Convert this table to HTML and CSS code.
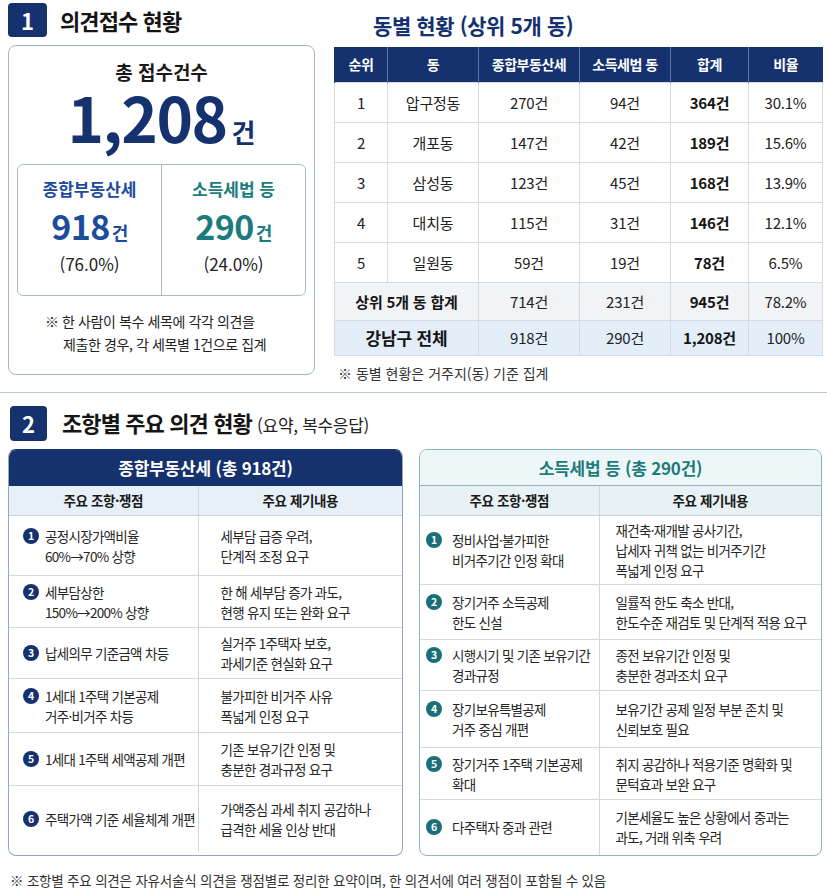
FILE: index.html
```html
<!DOCTYPE html>
<html lang="ko">
<head>
<meta charset="utf-8">
<title>의견접수 현황</title>
<link rel="stylesheet" href="styles.css">
</head>
<body>
<div class="page">
  <section class="sec1">
    <div class="col-left">
      <div class="sec-head">
        <span class="badge">1</span>
        <h1 class="sec-title">의견접수 현황</h1>
      </div>
      <div class="card">
        <div class="card-label">총 접수건수</div>
        <div class="big-num">1,208<span class="unit">건</span></div>
        <div class="split">
          <div class="split-cell blue">
            <div class="split-label">종합부동산세</div>
            <div class="split-num">918<span class="unit-s">건</span></div>
            <div class="split-pct">(76.0%)</div>
          </div>
          <div class="split-cell teal">
            <div class="split-label">소득세법 등</div>
            <div class="split-num">290<span class="unit-s">건</span></div>
            <div class="split-pct">(24.0%)</div>
          </div>
        </div>
        <p class="card-note">※ 한 사람이 복수 세목에 각각 의견을<br>제출한 경우, 각 세목별 1건으로 집계</p>
      </div>
    </div>
    <div class="col-right">
      <h2 class="sub-title">동별 현황 (상위 5개 동)</h2>
      <table class="dong">
        <colgroup>
          <col class="c1"><col class="c2"><col class="c3"><col class="c4"><col class="c5"><col class="c6">
        </colgroup>
        <thead>
          <tr><th>순위</th><th>동</th><th>종합부동산세</th><th>소득세법 동</th><th>합계</th><th>비율</th></tr>
        </thead>
        <tbody>
          <tr><td>1</td><td>압구정동</td><td>270건</td><td>94건</td><td class="b">364건</td><td>30.1%</td></tr>
          <tr><td>2</td><td>개포동</td><td>147건</td><td>42건</td><td class="b">189건</td><td>15.6%</td></tr>
          <tr><td>3</td><td>삼성동</td><td>123건</td><td>45건</td><td class="b">168건</td><td>13.9%</td></tr>
          <tr><td>4</td><td>대치동</td><td>115건</td><td>31건</td><td class="b">146건</td><td>12.1%</td></tr>
          <tr><td>5</td><td>일원동</td><td>59건</td><td>19건</td><td class="b">78건</td><td>6.5%</td></tr>
          <tr class="sum"><td colspan="2" class="b">상위 5개 동 합계</td><td>714건</td><td>231건</td><td class="b">945건</td><td>78.2%</td></tr>
          <tr class="total"><td colspan="2" class="b big">강남구 전체</td><td>918건</td><td>290건</td><td class="b">1,208건</td><td>100%</td></tr>
        </tbody>
      </table>
      <p class="dong-note">※ 동별 현황은 거주지(동) 기준 집계</p>
    </div>
  </section>

  <hr class="divider">

  <section class="sec2">
    <div class="sec-head sec-head2">
      <span class="badge badge2">2</span>
      <h1 class="sec-title">조항별 주요 의견 현황 <span class="sec-sub">(요약, 복수응답)</span></h1>
    </div>
    <div class="boxes">
      <div class="box box-navy">
        <div class="box-head">종합부동산세 (총 918건)</div>
        <table class="issues">
          <colgroup><col class="l1"><col class="l2"></colgroup>
          <thead><tr><th>주요 조항·쟁점</th><th>주요 제기내용</th></tr></thead>
          <tbody>
            <tr><td class="item-cell"><div class="item"><span class="num">1</span><span>공정시장가액비율<br>60%→70% 상향</span></div></td><td class="desc">세부담 급증 우려,<br>단계적 조정 요구</td></tr>
            <tr><td class="item-cell"><div class="item"><span class="num">2</span><span>세부담상한<br>150%→200% 상향</span></div></td><td class="desc">한 해 세부담 증가 과도,<br>현행 유지 또는 완화 요구</td></tr>
            <tr><td class="item-cell"><div class="item"><span class="num">3</span><span>납세의무 기준금액 차등</span></div></td><td class="desc">실거주 1주택자 보호,<br>과세기준 현실화 요구</td></tr>
            <tr><td class="item-cell"><div class="item"><span class="num">4</span><span>1세대 1주택 기본공제<br>거주·비거주 차등</span></div></td><td class="desc">불가피한 비거주 사유<br>폭넓게 인정 요구</td></tr>
            <tr><td class="item-cell"><div class="item"><span class="num">5</span><span>1세대 1주택 세액공제 개편</span></div></td><td class="desc">기존 보유기간 인정 및<br>충분한 경과규정 요구</td></tr>
            <tr><td class="item-cell"><div class="item"><span class="num">6</span><span>주택가액 기준 세율체계 개편</span></div></td><td class="desc">가액중심 과세 취지 공감하나<br>급격한 세율 인상 반대</td></tr>
          </tbody>
        </table>
      </div>
      <div class="box box-teal">
        <div class="box-head">소득세법 등 (총 290건)</div>
        <table class="issues">
          <colgroup><col class="r1"><col class="r2"></colgroup>
          <thead><tr><th>주요 조항·쟁점</th><th>주요 제기내용</th></tr></thead>
          <tbody>
            <tr><td class="item-cell"><div class="item"><span class="num">1</span><span>정비사업·불가피한<br>비거주기간 인정 확대</span></div></td><td class="desc">재건축·재개발 공사기간,<br>납세자 귀책 없는 비거주기간<br>폭넓게 인정 요구</td></tr>
            <tr><td class="item-cell"><div class="item"><span class="num">2</span><span>장기거주 소득공제<br>한도 신설</span></div></td><td class="desc">일률적 한도 축소 반대,<br>한도수준 재검토 및 단계적 적용 요구</td></tr>
            <tr><td class="item-cell"><div class="item"><span class="num">3</span><span>시행시기 및 기존 보유기간<br>경과규정</span></div></td><td class="desc">종전 보유기간 인정 및<br>충분한 경과조치 요구</td></tr>
            <tr><td class="item-cell"><div class="item"><span class="num">4</span><span>장기보유특별공제<br>거주 중심 개편</span></div></td><td class="desc">보유기간 공제 일정 부분 존치 및<br>신뢰보호 필요</td></tr>
            <tr><td class="item-cell"><div class="item"><span class="num">5</span><span>장기거주 1주택 기본공제<br>확대</span></div></td><td class="desc">취지 공감하나 적용기준 명확화 및<br>문턱효과 보완 요구</td></tr>
            <tr><td class="item-cell"><div class="item"><span class="num">6</span><span>다주택자 중과 관련</span></div></td><td class="desc">기본세율도 높은 상황에서 중과는<br>과도, 거래 위축 우려</td></tr>
          </tbody>
        </table>
      </div>
    </div>
    <p class="foot-note">※ 조항별 주요 의견은 자유서술식 의견을 쟁점별로 정리한 요약이며, 한 의견서에 여러 쟁점이 포함될 수 있음</p>
  </section>
</div>
</body>
</html>
```

FILE: styles.css
```css
* {
  box-sizing: border-box;
  margin: 0;
  padding: 0;
}

body {
  margin: 0;
  background: #ffffff;
  font-family: "Noto Sans CJK KR", "Noto Sans", sans-serif;
  color: #222222;
  width: 827px;
}

.page {
  padding: 3px 5px 0 8px;
}

/* ---------- section heads ---------- */
.sec-head {
  display: flex;
  align-items: center;
  height: 34px;
}

.badge {
  flex: none;
  width: 39px;
  height: 34px;
  background: #15316e;
  color: #ffffff;
  border-radius: 4px;
  display: flex;
  align-items: center;
  justify-content: center;
  font-size: 22px;
  font-weight: 700;
}

.sec-title {
  font-size: 22px;
  font-weight: 700;
  margin-left: 13px;
  color: #151515;
  letter-spacing: -0.9px;
  line-height: 30px;
}

.sec-sub {
  font-size: 17px;
  font-weight: 400;
  letter-spacing: -0.3px;
  color: #222222;
}

/* ---------- section 1 ---------- */
.sec1 {
  display: flex;
  gap: 19px;
}

.col-left {
  width: 307px;
  flex: none;
}

.card {
  margin-top: 8px;
  height: 330px;
  border: 1px solid #a3b3c9;
  border-radius: 8px;
  padding: 13px 8px 0;
}

.card-label {
  text-align: center;
  font-size: 19px;
  font-weight: 700;
  line-height: 26px;
  color: #1a1a1a;
}

.big-num {
  text-align: center;
  font-size: 62px;
  font-weight: 700;
  color: #15316e;
  line-height: 62px;
  height: 62px;
  margin-top: 0;
  letter-spacing: -1.5px;
}

.unit {
  font-size: 26px;
  line-height: 1;
  margin-left: 5px;
  letter-spacing: 0;
}

.split {
  margin-top: 17px;
  display: flex;
  border: 1px solid #a9b9cf;
  border-radius: 6px;
  height: 132px;
}

.split-cell {
  flex: 1;
  text-align: center;
  padding-top: 13px;
}

.split-cell + .split-cell {
  border-left: 1px solid #a9b9cf;
}

.split-label {
  font-size: 17px;
  font-weight: 700;
  line-height: 22px;
}

.split-num {
  font-size: 34px;
  font-weight: 700;
  line-height: 40px;
  height: 40px;
  margin-top: 6px;
  letter-spacing: -0.5px;
}

.unit-s {
  font-size: 18px;
  line-height: 1;
  margin-left: 2px;
}

.split-pct {
  font-size: 17px;
  line-height: 22px;
  margin-top: 7px;
  color: #222222;
}

.blue .split-label,
.blue .split-num {
  color: #1e4c9d;
}

.teal .split-label,
.teal .split-num {
  color: #1c7b7d;
}

.card-note {
  margin-top: 14px;
  font-size: 14px;
  line-height: 23px;
  letter-spacing: -0.4px;
  padding-left: 46px;
  text-indent: -18px;
  color: #222222;
}

.col-right {
  width: 488px;
  flex: none;
}

.sub-title {
  font-size: 21px;
  font-weight: 700;
  color: #15316e;
  padding: 7px 0 0 39px;
  line-height: 30px;
  margin-bottom: 7px;
  letter-spacing: -0.4px;
}

.dong {
  width: 488px;
  border-collapse: collapse;
  table-layout: fixed;
  font-size: 15px;
  letter-spacing: -0.2px;
}

.dong .c1 { width: 53px; }
.dong .c2 { width: 91px; }
.dong .c3 { width: 101px; }
.dong .c4 { width: 91px; }
.dong .c5 { width: 78px; }
.dong .c6 { width: 74px; }

.dong th {
  height: 35px;
  background: #15316e;
  color: #ffffff;
  font-size: 14px;
  font-weight: 700;
  letter-spacing: -0.5px;
  border-left: 1px solid #5d74a3;
}

.dong th:first-child {
  border-left: 1px solid #15316e;
}

.dong td {
  height: 40px;
  text-align: center;
  border: 1px solid #d5dbe3;
  color: #222222;
}

.dong td.b {
  font-weight: 700;
  color: #151515;
}

.dong .sum td {
  height: 38px;
  background: #f1f3f6;
}

.dong .total td {
  height: 35px;
  background: #e3eef9;
}

.dong td.big {
  font-size: 17px;
}

.dong-note {
  margin-top: 7px;
  padding-left: 4px;
  font-size: 14px;
  line-height: 20px;
  color: #333333;
}

.divider {
  border: 0;
  border-top: 1px solid #b9c7d6;
  margin: 9px -5px 0 -8px;
}

/* ---------- section 2 ---------- */
.sec-head2 {
  margin-top: 13px;
  height: 35px;
  padding-left: 2px;
}

.badge2 {
  width: 37px;
  height: 35px;
}

.sec-head2 .sec-title {
  margin-left: 15px;
}

.boxes {
  display: flex;
  gap: 16px;
  margin-top: 8px;
}

.box {
  border: 1px solid #93a6c2;
  border-radius: 8px;
  overflow: hidden;
}

.box-navy {
  width: 395px;
  border-top-color: #15316e;
}

.box-teal {
  width: 403px;
  border-color: #8db4b9;
}

.box-head {
  height: 36px;
  line-height: 36px;
  text-align: center;
  font-size: 17px;
  font-weight: 700;
  letter-spacing: -0.2px;
}

.box-navy .box-head {
  background: #15316e;
  color: #ffffff;
}

.box-teal .box-head {
  background: #eef7f8;
  color: #1c7b7d;
  border-bottom: 1px solid #8db4b9;
}

.issues {
  width: 100%;
  border-collapse: collapse;
  table-layout: fixed;
  font-size: 13.5px;
  letter-spacing: -0.7px;
  line-height: 20px;
  color: #262626;
}

.issues .l1 { width: 189px; }
.issues .r1 { width: 179px; }

.issues th {
  height: 30px;
  font-size: 13.5px;
  font-weight: 700;
  letter-spacing: -0.4px;
  color: #1a1a1a;
  border-bottom: 1px solid #c9d3de;
}

.issues th + th,
.issues td + td {
  border-left: 1px solid #cfd7e1;
}

.box-navy .issues th {
  background: #e7eff7;
}

.box-teal .issues th {
  background: #e8f2f4;
}

.issues td {
  vertical-align: middle;
  border-bottom: 1px solid #d3dae3;
  padding: 4px 0;
  white-space: nowrap;
}

.issues tr:last-child td {
  border-bottom: 0;
}

.item {
  display: flex;
  align-items: flex-start;
}

.num {
  flex: none;
  width: 16px;
  height: 16px;
  border-radius: 50%;
  color: #ffffff;
  font-size: 10.5px;
  font-weight: 700;
  line-height: 16px;
  text-align: center;
  letter-spacing: 0;
  margin-top: 2px;
}

.box-navy .num {
  background: #15316e;
  margin-right: 6px;
}

.box-teal .num {
  background: #1b6f78;
  margin-right: 10px;
}

.box-navy .item-cell { padding-left: 14px; }
.box-navy .desc { padding-left: 22px; }
.box-teal .item-cell { padding-left: 6px; }
.box-teal .desc { padding-left: 16px; }

.box-navy tbody tr:nth-child(1) { height: 60px; }
.box-navy tbody tr:nth-child(2) { height: 52px; }
.box-navy tbody tr:nth-child(3) { height: 51px; }
.box-navy tbody tr:nth-child(4) { height: 54px; }
.box-navy tbody tr:nth-child(5) { height: 53px; }
.box-navy tbody tr:nth-child(6) { height: 66px; }

.box-teal tbody tr:nth-child(1) { height: 67px; }
.box-teal tbody tr:nth-child(2) { height: 55px; }
.box-teal tbody tr:nth-child(3) { height: 51px; }
.box-teal tbody tr:nth-child(4) { height: 57px; }
.box-teal tbody tr:nth-child(5) { height: 52px; }
.box-teal tbody tr:nth-child(6) { height: 55px; }

.foot-note {
  margin-top: 14px;
  padding-left: 2px;
  font-size: 13.5px;
  line-height: 20px;
  letter-spacing: -0.2px;
  color: #333333;
}
```
